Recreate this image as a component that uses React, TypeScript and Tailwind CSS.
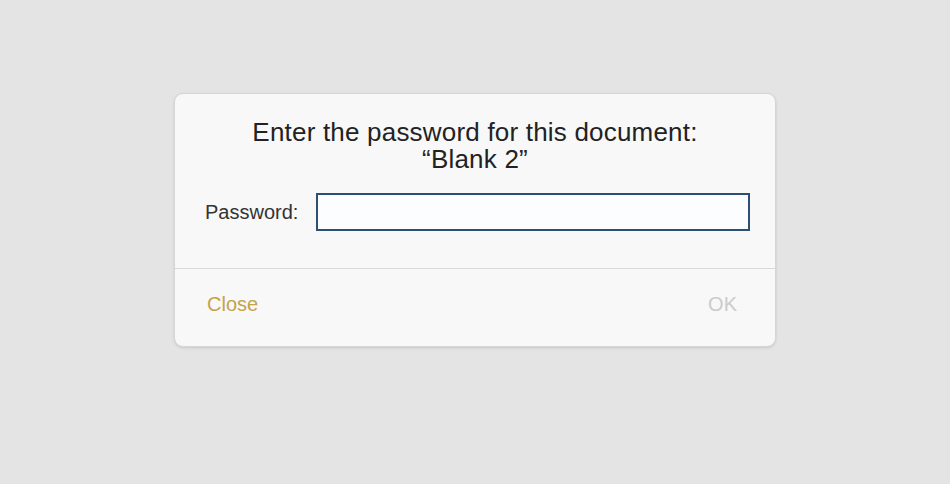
import React from 'react';

const App: React.FC = () => {
  return (
    <div className="min-h-screen w-full bg-[#e4e4e4] flex justify-center pt-[93px] font-['Liberation_Sans',Arial,sans-serif]">
      {/* Password dialog */}
      <div className="w-[602px] h-[254px] bg-[#f8f8f8] rounded-[9px] border border-[#d6d6d6] shadow-[0_1px_3px_rgba(0,0,0,0.12)] flex flex-col">
        <p className="pt-[25px] text-center text-[#222] text-[26px] leading-[27px] tracking-[0.2px]">
          Enter the password for this document:
          <br />
          “Blank 2”
        </p>

        <div className="flex items-center pl-[30px] pr-[25px] mt-[20px]">
          <label className="text-[20px] leading-[24px] text-[#333] mr-[18px]">Password:</label>
          <input
            type="password"
            className="flex-1 h-[38px] bg-[#fbfdff] border-2 border-[#2d4f73] outline-none"
          />
        </div>

        <div className="mt-[37px] border-t border-[#d8d8d8] flex justify-between pl-[32px] pr-[38px] pt-[23px]">
          <button className="text-[20px] leading-[24px] text-[#c4a24a]">Close</button>
          <button className="text-[20px] leading-[24px] text-[#cbcbcb]">OK</button>
        </div>
      </div>
    </div>
  );
};

export default App;
